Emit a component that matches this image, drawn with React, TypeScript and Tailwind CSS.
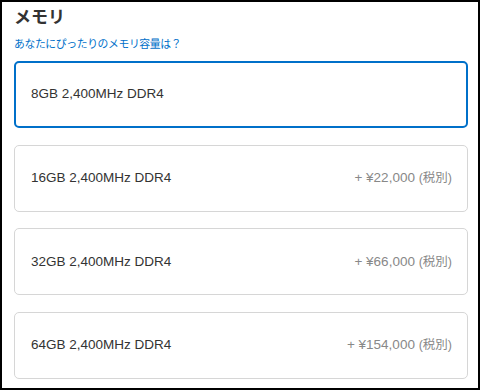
import React from "react";

const options = [
  { label: "8GB 2,400MHz DDR4", price: "" },
  { label: "16GB 2,400MHz DDR4", price: "+ ¥22,000" },
  { label: "32GB 2,400MHz DDR4", price: "+ ¥66,000" },
  { label: "64GB 2,400MHz DDR4", price: "+ ¥154,000" },
];

export default function App() {
  return (
    <div
      className="w-[480px] h-[390px] bg-white border-2 border-black overflow-hidden"
      style={{ fontFamily: '"Liberation Sans", "Noto Sans CJK JP", sans-serif' }}
    >
      <div className="pl-[12px] pr-[10px] pt-[2px]">
        <div className="text-[17px] font-bold text-[#333333] leading-[28px]">メモリ</div>
        <div className="mt-[4px] text-[10.8px] tracking-[-0.35px] text-[#0070c9] leading-[16px]">
          あなたにぴったりのメモリ容量は？
        </div>
        <div className="mt-[9px] flex flex-col gap-[16.6px]">
          {options.map((o, i) => (
            <div
              key={o.label}
              className={
                i === 0
                  ? "h-[67px] rounded-[5px] border-2 border-[#0070c9] flex items-center justify-between pl-[15px] pr-[14px]"
                  : "h-[67px] rounded-[5px] border border-[#d6d6d6] flex items-center justify-between pl-[16px] pr-[15px]"
              }
            >
              <span className="text-[13.5px] text-[#333333]">{o.label}</span>
              {o.price && (
                <span className="text-[13.5px] text-[#888888]">
                  {o.price} <span className="text-[12.5px]">(税別)</span>
                </span>
              )}
            </div>
          ))}
        </div>
      </div>
    </div>
  );
}
